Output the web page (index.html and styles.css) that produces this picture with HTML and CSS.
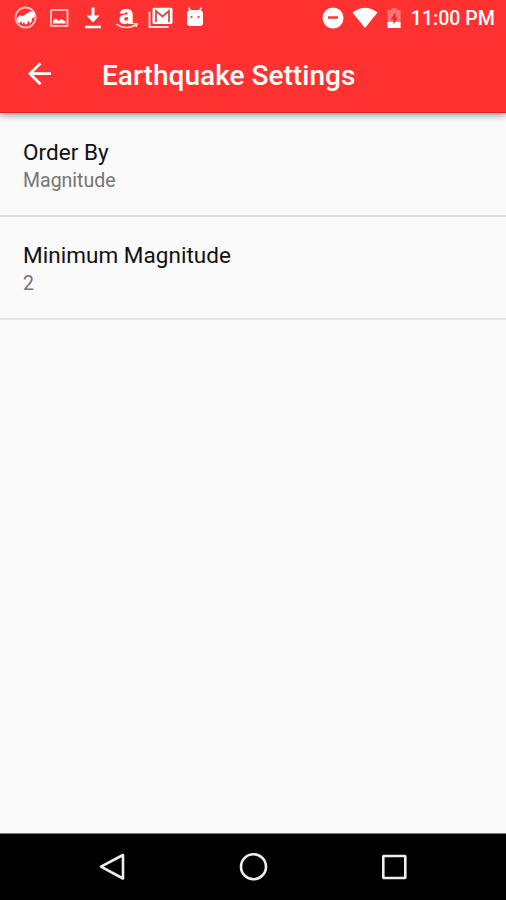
FILE: index.html
```html
<!DOCTYPE html>
<html lang="en">
<head>
    <meta charset="UTF-8">
    <meta name="viewport" content="width=device-width, initial-scale=1.0">
    <title>Earthquake Settings</title>
    <link rel="stylesheet" href="styles.css">
</head>
<body>
    <div class="screen">
        <header class="header">
            <div class="status-bar">
                <div class="notifications">
                    <svg class="status-icon" viewBox="0 0 24 24">
                        <circle cx="12.5" cy="11.5" r="10" fill="none" stroke="#ffb8b8" stroke-width="1.8"/>
                        <path d="M4 12L7 9.500L10 10L13 8L17 5.500L22 6L21.500 11L19 12.500L18.500 16L16.500 17.500L15.500 14.500L14 18L12 18.500L11 15.500L9.500 18.500L8 15L6.500 17.500L4.500 15.500Z" fill="#fff"/>
                    </svg>
                    <svg class="status-icon" viewBox="0 0 24 24">
                        <rect x="4" y="4" width="16.500" height="16" rx=".5" fill="none" stroke="#ffb8b8" stroke-width="2"/>
                        <path d="M6 17.500V14.500L9 12.500L11.500 15L14.500 13L18.500 15.500V17.500Z" fill="#fff"/>
                    </svg>
                    <svg class="status-icon" viewBox="0 0 24 24">
                        <path d="M10.500 1.500H13.500V9.500H18.500L12 16.500L5.500 9.500H10.500ZM4 19.800H20V22.200H4Z" fill="#fff"/>
                    </svg>
                    <svg class="status-icon" viewBox="0 0 24 24">
                        <text class="shop-letter" x="11.500" y="17.500" text-anchor="middle">a</text>
                        <path d="M1.500 18C7 22.500 15 22.500 20.500 19M18.500 17.800L22 18L21 21" fill="none" stroke="#ffdede" stroke-width="1.600"/>
                    </svg>
                    <svg class="status-icon" viewBox="0 0 24 24">
                        <path d="M.5 5.500V21H19.500" fill="none" stroke="#ffdede" stroke-width="1.800"/>
                        <rect x="3.500" y="1.800" width="20" height="16.200" rx="1.500" fill="#fff"/>
                        <path d="M7 16V5L13.500 10.500L20 5V16" fill="none" stroke="#d94848" stroke-width="1.800"/>
                    </svg>
                    <svg class="status-icon" viewBox="0 0 24 24">
                        <path d="M5.500 1.500L8 5.500M18.500 1.500L16 5.500" stroke="#ffdede" stroke-width="1.500"/>
                        <path d="M4 8Q4 4 8 4H16Q20 4 20 8V17Q20 20 17 20H7Q4 20 4 17Z" fill="#fff"/>
                        <circle cx="8.500" cy="11" r="1.100" fill="#ff3131"/>
                        <circle cx="15.500" cy="11" r="1.100" fill="#ff3131"/>
                    </svg>
                </div>
                <div class="system">
                    <svg class="status-icon" viewBox="0 0 24 24">
                        <circle cx="12" cy="12" r="10.500" fill="#fff"/>
                        <path d="M7 11.500H17" stroke="#ff3131" stroke-width="2.400"/>
                    </svg>
                    <svg class="wifi-icon" viewBox="0 0 26 24">
                        <path d="M.5 6.500Q13-3 25.500 6.500L13 22Z" fill="#fff"/>
                    </svg>
                    <svg class="battery-icon" viewBox="0 0 14 24">
                        <path d="M4.500 2H9.500V4H13.500V22H.5V4H4.500Z" fill="#ff7474"/>
                        <path d="M.5 16H13.500V22H.5Z" fill="#fff"/>
                        <path d="M8.500 6L3.500 13.500H6.500V18.500L11 11.500H8.500Z" fill="#ef2929"/>
                    </svg>
                    <span class="clock">11:00 PM</span>
                </div>
            </div>
            <div class="toolbar">
                <svg class="back-icon" viewBox="0 0 24 24">
                    <path d="M12.500 1.200L2 11.700L12.500 22.200M2 11.700H23" fill="none" stroke="#fff" stroke-width="2.800"/>
                </svg>
                <h1 class="title">Earthquake Settings</h1>
            </div>
        </header>

        <main class="settings">
            <div class="preference">
                <div class="preference-title">Order By</div>
                <div class="preference-summary">Magnitude</div>
            </div>
            <div class="preference">
                <div class="preference-title">Minimum Magnitude</div>
                <div class="preference-summary">2</div>
            </div>
        </main>

        <nav class="nav-bar">
            <svg class="nav-icon" viewBox="0 0 30 30">
                <path d="M26 3V26.500L4 14.700Z" fill="none" stroke="#eee" stroke-width="2.600" stroke-linejoin="round"/>
            </svg>
            <svg class="nav-icon" viewBox="0 0 30 30">
                <circle cx="15.500" cy="14.700" r="12.500" fill="none" stroke="#eee" stroke-width="2.600"/>
            </svg>
            <svg class="nav-icon" viewBox="0 0 30 30">
                <rect x="4.300" y="4" width="22" height="22" rx=".5" fill="none" stroke="#eee" stroke-width="2.600"/>
            </svg>
        </nav>
    </div>
</body>
</html>
```
FILE: styles.css
```css
body {
    margin: 0;
    font-family: Roboto, "Liberation Sans", sans-serif;
    background-color: #fafafa;
}
.screen {
    display: flex;
    flex-direction: column;
    height: 900px;
    overflow: hidden;
}
.header {
    box-sizing: border-box;
    height: 113px;
    color: #fff;
    background-color: #ff3131;
    border-bottom: 1px solid #e32226;
    box-shadow: 0 2px 7px rgba(0, 20, 20, 0.45);
}
.status-bar {
    display: flex;
    justify-content: space-between;
    align-items: center;
    height: 35px;
    padding: 0 11px 0 13px;
}
.notifications {
    display: flex;
    gap: 10px;
}
.system {
    display: flex;
    align-items: center;
}
.status-icon {
    width: 24px;
    height: 24px;
    overflow: visible;
}
.wifi-icon {
    width: 26px;
    height: 24px;
    margin-left: 7px;
}
.battery-icon {
    width: 14px;
    height: 24px;
    margin-left: 9px;
}
.clock {
    margin-left: 10px;
    padding-top: 2px;
    font-size: 19.6px;
    font-weight: 500;
    line-height: 33px;
}
.shop-letter {
    font-size: 28px;
    font-weight: 900;
    fill: #fff;
}
.toolbar {
    display: flex;
    align-items: center;
    height: 78px;
    padding-left: 28px;
}
.back-icon {
    width: 24px;
    height: 24px;
    margin-right: 50px;
}
.title {
    margin: 3px 0 0;
    font-size: 28px;
    font-weight: 500;
    line-height: 32px;
    letter-spacing: 0.03px;
}
.settings {
    flex: 1;
    padding-top: 1px;
}
.preference {
    box-sizing: border-box;
    height: 103px;
    padding: 24px 23px 0;
    border-bottom: 2px solid #dedede;
}
.preference:last-child {
    border-bottom-color: #e6e6e6;
}
.preference-title {
    margin-bottom: 1px;
    color: #111;
    font-size: 22.5px;
    line-height: 28px;
    letter-spacing: 0.04px;
}
.preference-summary {
    color: #757575;
    font-size: 19.5px;
    line-height: 28px;
}
.nav-bar {
    display: flex;
    justify-content: center;
    align-items: center;
    gap: 111px;
    height: 66px;
    background-color: #000;
    border-top: 1px solid #777;
}
.nav-icon {
    width: 30px;
    height: 30px;
}
```
